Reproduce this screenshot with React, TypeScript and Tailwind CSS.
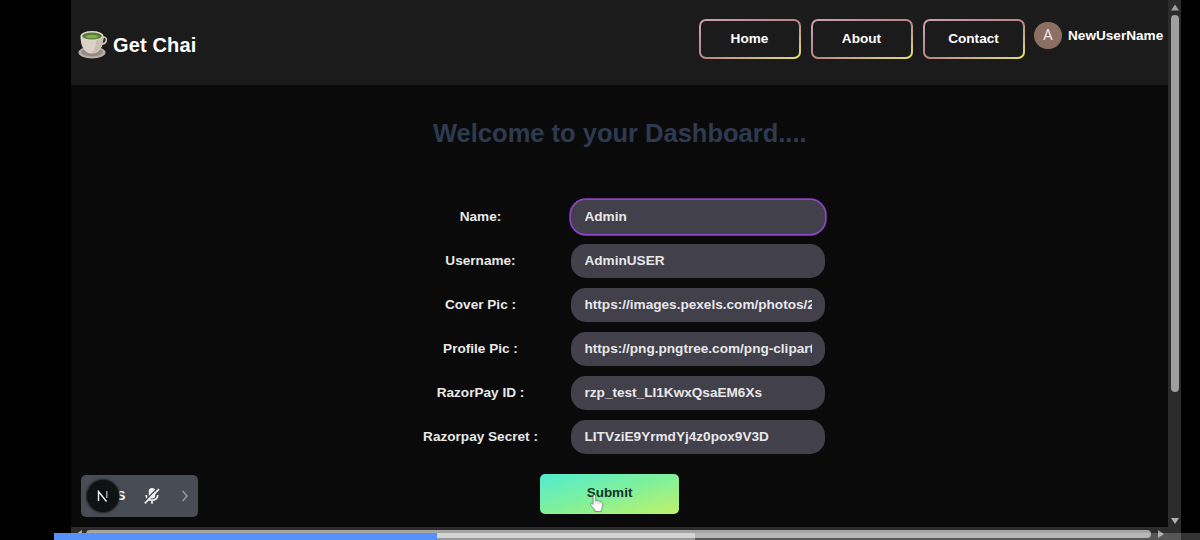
const labelFont = "text-[13.6px] font-bold whitespace-nowrap";

const navItems = ["Home", "About", "Contact"];

const fields = [
  { label: "Name:", value: "Admin", active: true },
  { label: "Username:", value: "AdminUSER" },
  { label: "Cover Pic :", value: "https://images.pexels.com/photos/2" },
  { label: "Profile Pic :", value: "https://png.pngtree.com/png-clipart" },
  { label: "RazorPay ID :", value: "rzp_test_LI1KwxQsaEM6Xs" },
  { label: "Razorpay Secret :", value: "LITVziE9YrmdYj4z0pox9V3D" },
];

function TeaCup() {
  return (
    <svg viewBox="0 0 30 30" className="h-[30px] w-[30px]" aria-hidden="true">
      <ellipse cx="14" cy="22.5" rx="13.5" ry="6" fill="#b8afa9" />
      <ellipse cx="14" cy="22" rx="11" ry="4.4" fill="#958c86" />
      <path d="M24 7.5 C30 5.5 30 13.5 23 14.5" fill="none" stroke="#c9beb4" strokeWidth="1.7" />
      <path d="M2.5 6 C2.5 16 6 23.5 14 23.5 S25.5 16 25.5 6 Z" fill="#dcd1c6" />
      <path d="M18 10 C18 16 17 20 14 23 C21 23.5 25.5 16 25.5 6 Z" fill="#cbbfb4" />
      <ellipse cx="14" cy="5.7" rx="11.5" ry="4.7" fill="#e4dbd0" />
      <ellipse cx="14" cy="6" rx="9.8" ry="3.6" fill="#527b31" />
      <ellipse cx="14" cy="6.5" rx="6.5" ry="1.7" fill="#86ab58" />
    </svg>
  );
}

function Header() {
  return (
    <header className="flex h-[85px] shrink-0 items-start justify-between bg-[#1b1b1c] pl-[7px] pr-[5px]">
      <div className="flex items-center gap-[5px] pt-[30px]">
        <TeaCup />
        <span className="text-[20px] font-bold leading-[30px] tracking-[0.15px] text-white">Get Chai</span>
      </div>
      <div className="flex pt-[19px]">
        <nav className="flex gap-[10px]">
          {navItems.map((item) => (
            <button
              key={item}
              className="h-[40px] w-[102px] rounded-[7px] bg-linear-to-br from-[#c9a0b2] via-[#b9858a] via-50% to-[#e5e07a] p-[2px]"
            >
              <span className="flex h-full w-full items-center justify-center rounded-[5px] bg-[#1b1b1c] pr-[1px] pt-[1px] text-[13.6px] font-bold text-white">
                {item}
              </span>
            </button>
          ))}
        </nav>
        <div className="ml-[9px] mt-[3px] flex h-[27px] w-[28px] items-center justify-center rounded-full bg-[#8d6e63] font-[Roboto] text-[15px] text-[#eee6e3]">
          A
        </div>
        <span className="ml-[6px] mt-[7px] w-[95px] whitespace-nowrap text-[13.6px] font-bold leading-[20px] text-white">
          NewUserName
        </span>
      </div>
    </header>
  );
}

function Toolbar() {
  return (
    <div className="absolute left-[10px] top-[475px] flex h-[42px] w-[117px] items-center rounded-[5px] bg-[#484c54]">
      <div className="relative z-10 ml-[6px] flex h-[32px] w-[32px] shrink-0 items-center justify-center rounded-full bg-[#101113] shadow-[0_0_2px_1px_#202226]">
        <svg viewBox="0 0 12 12" className="h-[12px] w-[12px]" fill="none" stroke="#f2f2f2" strokeWidth="1.4">
          <path d="M1.5 11 V1.5 L9.5 11.5" />
          <path d="M9.8 1 V8" stroke="#aaaaaa" />
        </svg>
      </div>
      <span className="-ml-[2px] w-[8px] text-[12.5px] font-bold text-white">S</span>
      <svg viewBox="0 0 18 18" className="ml-[18px] h-[18px] w-[18px] shrink-0" fill="none">
        <rect x="5.8" y="1" width="6.4" height="10.5" rx="3.2" fill="#f1f1f1" />
        <path d="M3.2 8 C3.2 15 14.8 15 14.8 8 M9 13 V16.8" stroke="#f1f1f1" strokeWidth="1.7" />
        <path d="M1 14.8 L14.5 1.3" stroke="#484c54" strokeWidth="1.5" />
        <path d="M1.8 16.4 L16 2.2" stroke="#f1f1f1" strokeWidth="1.7" />
      </svg>
      <svg viewBox="0 0 8 12" className="ml-[20px] h-[12px] w-[8px]" fill="none" stroke="#92969d" strokeWidth="1.6">
        <path d="M1.5 1 L6 6 L1.5 11" />
      </svg>
    </div>
  );
}

function Pointer() {
  return (
    <svg viewBox="0 0 16 20" className="absolute left-[49px] top-[20px] h-[19px] w-[16px]">
      <path
        d="M4.5 1.2 C5.6 .6 6.5 1.2 6.6 2.2 V7 C7.4 6.5 8.5 6.7 8.8 7.5 C9.7 7 10.8 7.4 11.1 8.2 C12.3 7.8 13.6 8.4 13.8 9.8 C14.2 13 13.5 15 12.5 16.5 V18.5 H5.8 V17 C4.5 15.5 3 13.5 1.6 11.9 C.5 10.2 2 9.2 3.1 10.2 L3.9 11 V2.2 Z"
        fill="#fff"
        stroke="#5c7270"
        strokeWidth=".8"
      />
      <path d="M6.6 7 V10 M8.9 7.7 V10.5 M11.1 8.5 V10.8" stroke="#a8b3b1" strokeWidth=".7" />
    </svg>
  );
}

function Dashboard() {
  return (
    <main className="flex flex-1 flex-col pt-[33px]">
      <h1 className="ml-[362px] whitespace-nowrap text-[25.5px] font-bold leading-[30px] text-[#2e3a50]">
        Welcome to your Dashboard....
      </h1>
      <form className="ml-[340px] mt-[47px] flex flex-col" onSubmit={(e) => e.preventDefault()}>
        {fields.map((field) => (
          <div key={field.label} className="flex h-[44px] items-center">
            <span className={`${labelFont} w-[139px] leading-[18px] text-center text-[#e8e8e8]`}>{field.label}</span>
            <div
              className={`ml-[21px] flex h-[34px] w-[254px] items-center rounded-[15px] bg-[#42404a] px-[13.5px] ${
                field.active ? "ring-[1.7px] ring-[#8f43c8]" : ""
              }`}
            >
              <span className={`${labelFont} w-full overflow-hidden pb-[1px] leading-[18px] text-[#e8e8ea]`}>
                {field.value}
              </span>
            </div>
          </div>
        ))}
        <button
          type="submit"
          className="relative ml-[129px] mt-[15px] flex h-[40px] w-[139px] items-center justify-center rounded-[5px] bg-linear-to-br from-[#4decd0] via-[#80f09a] to-[#bdf264] pb-[2px] text-[13.5px] font-bold text-[#14332d]"
        >
          Submit
          <Pointer />
        </button>
      </form>
    </main>
  );
}

function VerticalScrollbar() {
  return (
    <div className="flex h-[540px] w-[13px] flex-col items-center justify-between bg-[#2c2c2c] pb-[16px] pt-[4px]">
      <div className="flex flex-col items-center gap-[4px]">
        <svg viewBox="0 0 8 6" className="h-[7px] w-[8px]">
          <path d="M4 0 L8 6 H0 Z" fill="#a0a0a0" />
        </svg>
        <div className="h-[377px] w-[8px] rounded-full bg-[#9f9f9f]" />
      </div>
      <svg viewBox="0 0 8 6" className="h-[6px] w-[8px]">
        <path d="M0 0 H8 L4 6 Z" fill="#b0b0b0" />
      </svg>
    </div>
  );
}

function HorizontalScrollbar() {
  return (
    <div className="flex h-[13px] items-start bg-[#2c2c2c] pt-[3px]">
      <svg viewBox="0 0 6 8" className="ml-[5px] h-[8px] w-[6px]">
        <path d="M6 0 V8 L0 4 Z" fill="#b0b0b0" />
      </svg>
      <div className="ml-[4px] h-[8px] w-[1065px] rounded-full bg-[#a5a5a5]" />
      <svg viewBox="0 0 6 8" className="ml-[7px] h-[8px] w-[6px]">
        <path d="M0 0 V8 L6 4 Z" fill="#a0a0a0" />
      </svg>
    </div>
  );
}

export default function App() {
  return (
    <div className="relative flex h-[540px] w-[1200px] overflow-hidden bg-black pl-[71px] font-['Liberation_Sans',Arial,sans-serif]">
      <div className="relative flex w-[1097px] flex-col bg-[#0a0a0b]">
        <Header />
        <Dashboard />
        <HorizontalScrollbar />
        <Toolbar />
      </div>
      <VerticalScrollbar />
      <div className="absolute bottom-0 left-[54px] flex h-[7px] w-[1146px] bg-white/20">
        <div className="h-full w-[383px] bg-[#5891fa]" />
        <div className="h-full w-[258px] bg-white/40" />
      </div>
    </div>
  );
}
